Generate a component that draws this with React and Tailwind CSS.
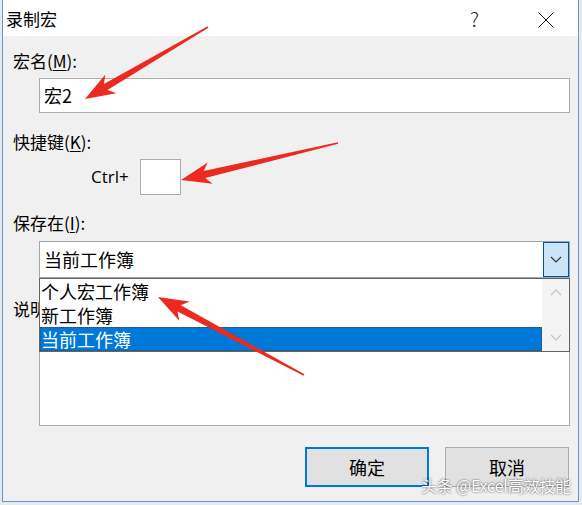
import React from "react";

const FONT = { fontFamily: '"Noto Sans CJK SC", "Noto Sans", sans-serif' };

// Builds a tapered callout arrow (thin tail, wide barbed head) as polygon points
function arrowPoints(x1, y1, x2, y2) {
  const dx = x2 - x1;
  const dy = y2 - y1;
  const len = Math.hypot(dx, dy);
  const ux = dx / len;
  const uy = dy / len;
  const nx = -uy;
  const ny = ux;
  const head = 30;
  const headHalf = 11;
  const neck = 3.5;
  const tail = 0.8;
  const bx = x2 - ux * head;
  const by = y2 - uy * head;
  const nbx = x2 - ux * (head - 6);
  const nby = y2 - uy * (head - 6);
  const pts = [
    [x1 + nx * tail, y1 + ny * tail],
    [nbx + nx * neck, nby + ny * neck],
    [bx + nx * headHalf, by + ny * headHalf],
    [x2, y2],
    [bx - nx * headHalf, by - ny * headHalf],
    [nbx - nx * neck, nby - ny * neck],
    [x1 - nx * tail, y1 - ny * tail],
  ];
  return pts.map((p) => `${p[0].toFixed(1)},${p[1].toFixed(1)}`).join(" ");
}

function Chevron({ up = false, color = "#333", className = "" }) {
  return (
    <svg width="12" height="7" viewBox="0 0 12 7" className={className}>
      <polyline
        points={up ? "1,6 6,1 11,6" : "1,1 6,6 11,1"}
        fill="none"
        stroke={color}
        strokeWidth="1.2"
      />
    </svg>
  );
}

function Label({ children }) {
  return <div className="pl-[10px] text-[17px] leading-[22px] text-black">{children}</div>;
}

export default function App() {
  return (
    <div className="relative w-[582px] h-[505px] overflow-hidden bg-[#e9e9e9]" style={FONT}>
      <div className="ml-[2px] w-[577px] h-[502px] flex flex-col border-x border-b border-[#5a9bd8] bg-[#f0f0f0]">
        {/* title bar */}
        <div className="h-[36px] bg-white flex items-center shrink-0">
          <div className="pl-[3px] text-[17px] leading-[22px] text-black pt-[2px]">录制宏</div>
          <div className="ml-auto mr-[59px] text-[20px] leading-[22px] text-[#222] font-light pt-[2px]">?</div>
          <svg width="16" height="16" viewBox="0 0 16 16" className="mr-[24px] mt-[3px]">
            <line x1="0.5" y1="0.5" x2="15.5" y2="15.5" stroke="#111" strokeWidth="1" />
            <line x1="15.5" y1="0.5" x2="0.5" y2="15.5" stroke="#111" strokeWidth="1" />
          </svg>
        </div>

        {/* form body */}
        <div className="flex flex-col pr-[8px]">
          <div className="mt-[14px]">
            <Label>
              宏名(<span className="underline underline-offset-2">M</span>):
            </Label>
          </div>
          <div className="mt-[6px] ml-[36px] h-[35px] bg-white border border-[#adadad] flex items-center pl-[4px] text-[18px] text-black">
            宏2
          </div>

          <div className="mt-[18px]">
            <Label>
              快捷键(<span className="underline underline-offset-2">K</span>):
            </Label>
          </div>
          <div className="mt-[6px] flex items-center">
            <span className="ml-[88px] w-[49px] text-[17px] text-black" style={{ fontFamily: '"Open Sans", "Noto Sans", sans-serif' }}>
              Ctrl+
            </span>
            <div className="w-[41px] h-[36px] bg-white border border-[#adadad]" />
          </div>

          <div className="mt-[17px]">
            <Label>
              保存在(<span className="underline underline-offset-2">I</span>):
            </Label>
          </div>

          {/* combo box with its open list */}
          <div className="relative mt-[7px] ml-[36px] z-10">
            <div className="h-[37px] bg-white border border-[#a5a5a5] flex items-center">
              <span className="pl-[4px] text-[18px] text-black">当前工作簿</span>
              <div className="ml-auto w-[26px] h-[35px] bg-[#cce4f7] border border-[#005499] flex items-center justify-center">
                <Chevron />
              </div>
            </div>
            <div className="absolute left-0 right-0 top-[37px] h-[74px] bg-white border border-[#646464] flex">
              <div className="flex-1 flex flex-col text-[18px]">
                <div className="h-[24px] leading-[24px] pl-[1px] text-black">个人宏工作簿</div>
                <div className="h-[24px] leading-[24px] pl-[1px] text-black">新工作簿</div>
                <div className="h-[24px] leading-[24px] pl-[1px] text-white bg-[#0078d7] outline-1 outline-dotted outline-offset-[-1px] outline-[#444]">
                  当前工作簿
                </div>
              </div>
              <div className="w-[27px] bg-[#f3f3f3] flex flex-col items-center justify-between py-[10px]">
                <Chevron up color="#c2c2c2" />
                <Chevron color="#c2c2c2" />
              </div>
            </div>
          </div>

          <div className="mt-[20px]">
            <Label>说明(D):</Label>
          </div>
          <div className="mt-[5px] ml-[36px] h-[101px] bg-white border border-[#adadad]" />

          <div className="mt-[21px] flex justify-end gap-[16px] pr-[1px]">
            <button className="w-[124px] h-[40px] bg-[#e1e1e1] border-2 border-[#0078d7] text-[18px] text-black">
              确定
            </button>
            <button className="w-[124px] h-[40px] bg-[#e1e1e1] border border-[#adadad] text-[18px] text-black">
              取消
            </button>
          </div>
        </div>
      </div>

      {/* callout arrows */}
      <svg className="absolute inset-0 pointer-events-none z-20" width="582" height="505">
        <polygon points={arrowPoints(208, 27, 85, 99)} fill="#ec2a22" />
        <polygon points={arrowPoints(338, 143, 181, 180)} fill="#ec2a22" />
        <polygon points={arrowPoints(304, 375, 158, 297)} fill="#ec2a22" />
      </svg>

      {/* watermark */}
      <div className="absolute left-[421px] top-[474px] z-30 text-[16px] leading-[22px] text-white [text-shadow:0_0_2px_rgba(0,0,0,0.8)] tracking-[-0.2px]">
        头条 @Excel高效技能
      </div>
    </div>
  );
}
